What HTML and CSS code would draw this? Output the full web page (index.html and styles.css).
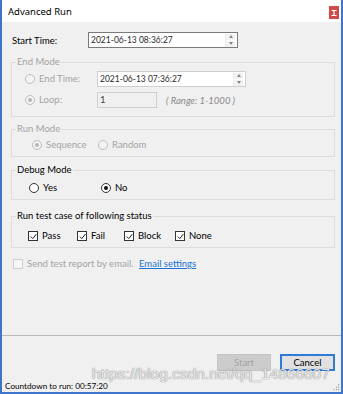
FILE: index.html
```html
<!DOCTYPE html>
<html>
<head>
<meta charset="utf-8">
<link rel="stylesheet" href="styles.css">
</head>
<body>
<div class="win">
  <div class="titlebar">
    <span class="title">Advanced Run</span>
    <span class="close"><svg width="6" height="6" viewBox="0 0 6 6"><path d="M0.5 0.5h5M0.5 5.5h5M3 0.5v5" stroke="#fff" stroke-width="1.2" fill="none"/></svg></span>
  </div>
  <div class="main">
    <div class="row start-row">
      <span class="lbl">Start Time:</span>
      <div class="input dark">
        <span class="val num">2021-06-13 08:36:27</span>
        <span class="spin"><i class="up"></i><i class="down"></i></span>
      </div>
    </div>

    <fieldset class="grp g-end">
      <legend class="dis">End Mode</legend>
      <div class="gbody">
        <div class="row er">
          <span class="radio dis-r"></span><span class="rl dis w-end">End Time:</span>
          <div class="input light wide">
            <span class="val num">2021-06-13 07:36:27</span>
            <span class="spin"><i class="up"></i><i class="down"></i></span>
          </div>
        </div>
        <div class="row er loop">
          <span class="radio dis-r on"></span><span class="rl dis w-end">Loop:</span>
          <div class="input gray short"><span class="val">1</span></div>
          <span class="range">( Range: 1-1000 )</span>
        </div>
      </div>
    </fieldset>

    <fieldset class="grp g-run">
      <legend class="dis">Run Mode</legend>
      <div class="gbody row opts run-opts">
        <span class="opt"><span class="radio dis-r on"></span><span class="rl dis">Sequence</span></span>
        <span class="opt"><span class="radio dis-r"></span><span class="rl dis">Random</span></span>
      </div>
    </fieldset>

    <fieldset class="grp g-debug">
      <legend>Debug Mode</legend>
      <div class="gbody row opts debug-opts">
        <span class="opt o-yes"><span class="radio"></span><span class="rl">Yes</span></span>
        <span class="opt"><span class="radio on"></span><span class="rl">No</span></span>
      </div>
    </fieldset>

    <fieldset class="grp g-status">
      <legend>Run test case of following status</legend>
      <div class="gbody row opts st-opts">
        <span class="opt c-pass"><span class="cb"><svg width="7" height="7" viewBox="0 0 7 7"><path d="M0.8 3.6l2 2 3.6-4.6" stroke="#222" stroke-width="1" fill="none"/></svg></span><span class="rl">Pass</span></span>
        <span class="opt c-fail"><span class="cb"><svg width="7" height="7" viewBox="0 0 7 7"><path d="M0.8 3.6l2 2 3.6-4.6" stroke="#222" stroke-width="1" fill="none"/></svg></span><span class="rl">Fail</span></span>
        <span class="opt c-block"><span class="cb"><svg width="7" height="7" viewBox="0 0 7 7"><path d="M0.8 3.6l2 2 3.6-4.6" stroke="#222" stroke-width="1" fill="none"/></svg></span><span class="rl">Block</span></span>
        <span class="opt"><span class="cb"><svg width="7" height="7" viewBox="0 0 7 7"><path d="M0.8 3.6l2 2 3.6-4.6" stroke="#222" stroke-width="1" fill="none"/></svg></span><span class="rl">None</span></span>
      </div>
    </fieldset>

    <div class="row send-row">
      <span class="cb dis-cb"></span><span class="rl dis send-lbl">Send test report by email.</span>
      <a class="link">Email settings</a>
    </div>
  </div>
  <div class="footer">
    <div class="btn btn-dis">Start</div>
    <div class="btn btn-def">Cancel</div>
  </div>
  <div class="status">
    <span class="st-text">Countdown to run: 00:57:20</span>
    <span class="grip"><svg width="7" height="7" viewBox="0 0 7 7" fill="#9a9a9a"><rect x="5" y="0" width="1.2" height="1.2"/><rect x="3" y="2.5" width="1.2" height="1.2"/><rect x="5" y="2.5" width="1.2" height="1.2"/><rect x="0.5" y="5" width="1.2" height="1.2"/><rect x="3" y="5" width="1.2" height="1.2"/><rect x="5" y="5" width="1.2" height="1.2"/></svg></span>
  </div>
  <div class="watermark">https://blog.csdn.net/qq_14866607</div>
</div>
</body>
</html>
```
FILE: styles.css
```css
* { box-sizing: border-box; }
html, body { margin: 0; padding: 0; background: #f0f0f0; }
body {
  font-family: Lato, "Noto Sans", sans-serif;
  font-size: 9.5px;
  color: #000;
}
.win {
  position: relative;
  width: 343px;
  height: 394px;
  border-left: 2px solid #3e74cc;
  border-right: 2px solid #3e74cc;
  border-bottom: 2px solid #3e74cc;
  background: #f0f0f0;
  display: flex;
  flex-direction: column;
  overflow: hidden;
}
.titlebar {
  height: 22px;
  background: #fff;
  display: flex;
  align-items: flex-start;
  justify-content: space-between;
  padding-left: 6px;
}
.title { line-height: 12px; margin-top: 6px; font-family: "Noto Sans", sans-serif; font-size: 9.5px; }
.close {
  width: 10px;
  height: 13px;
  margin-top: 6px;
  margin-right: 2px;
  background: #cf4b4b;
  display: flex;
  align-items: center;
  justify-content: center;
}
.main {
  flex: 1;
  padding: 0 6px 0 9px;
  display: flex;
  flex-direction: column;
}
.row { display: flex; align-items: center; }
.start-row { margin-top: 10px; height: 16px; }
.lbl { width: 77px; padding-left: 1px; }
.input {
  position: relative;
  height: 16px;
  background: #fff;
  display: flex;
  align-items: center;
  padding-left: 2px;
  color: #222;
}
.input.dark { width: 150px; border: 1px solid #7a7a7a; }
.input.light { border: 1px solid #cfcfcf; }
.input.wide { width: 149px; }
.input.gray { background: #f0f0f0; border: 1px solid #cfcfcf; color: #444; }
.input.short { width: 60px; }
.val { flex: 1; line-height: 12px; }
.val.num { font-size: 8.5px; color: #2a2a2a; }
.spin {
  width: 9px;
  height: 14px;
  margin-right: 3px;
  display: flex;
  flex-direction: column;
  justify-content: center;
  gap: 1px;
  border-left: 1px solid #eee;
}
.spin i {
  width: 9px; height: 6px;
  background: #f2f2f2;
  position: relative;
  display: block;
}
.spin i::after {
  content: "";
  position: absolute;
  left: 2.5px; top: 1.5px;
  border-left: 2px solid transparent;
  border-right: 2px solid transparent;
}
.spin i.up::after { border-bottom: 3px solid #888; }
.spin i.down::after { border-top: 3px solid #888; }

.grp {
  margin: 0;
  padding: 0;
  border: 1px solid #dcdcdc;
  min-width: 0;
}
.grp legend {
  padding: 0 1px;
  margin-left: 4px;
  line-height: 12px;
}
.dis { color: #a3a3a3; }
.g-end { margin-top: 8px; }
.g-end .gbody { padding: 3px 0 8px 13px; }
.er { height: 16px; }
.loop { margin-top: 5px; }
.w-end { width: 58px; }
.radio {
  width: 10px; height: 10px;
  border-radius: 50%;
  border: 1px solid #333;
  background: #fff;
  position: relative;
  flex: none;
}
.radio.on::after {
  content: "";
  position: absolute;
  left: 2px; top: 2px;
  width: 4px; height: 4px;
  border-radius: 50%;
  background: #111;
}
.radio.dis-r { border-color: #bcbcbc; background: #f4f4f4; }
.radio.dis-r.on::after { background: #b4b4b4; }
.rl { margin-left: 4px; line-height: 12px; }
.range { margin-left: 9px; font-style: italic; color: #8a8a8a; }

.g-run { margin-top: 6px; }
.g-run .gbody { padding: 4px 0 5px 20px; }
.opts { height: 12px; box-sizing: content-box; }
.opt { display: flex; align-items: center; }
.run-opts .opt:first-child { width: 66px; }

.g-debug { margin-top: 7px; }
.g-debug .gbody { padding: 6px 0 5px 17px; }
.o-yes { width: 72px; }

.g-status { margin-top: 10px; }
.g-status .gbody { padding: 8px 0 5px 16px; }
.cb {
  width: 10px; height: 10px;
  border: 1px solid #333;
  background: #fff;
  display: flex;
  align-items: center;
  justify-content: center;
  flex: none;
}
.c-pass { width: 49px; }
.c-fail { width: 47px; }
.c-block { width: 51px; }

.send-row { margin-top: 10px; height: 12px; padding-left: 2px; }
.dis-cb { border-color: #cfcfcf; background: #f7f7f7; }
.send-lbl { width: 112px; }
.link { color: #1a73d6; text-decoration: underline; line-height: 12px; }

.footer {
  height: 44px;
  border-top: 1px solid #b9b9b9;
  display: flex;
  justify-content: flex-end;
  align-items: flex-start;
  gap: 9px;
  padding: 18px 6px 0 0;
}
.btn {
  width: 54px;
  height: 17px;
  display: flex;
  align-items: center;
  justify-content: center;
}
.btn-dis { background: #cccccc; border: 1px solid #c4c4c4; color: #a3a3a3; }
.btn-def { width: 55px; background: #e1e1e1; border: 1px solid #2f7bd9; box-shadow: inset 0 0 0 1px #2f7bd9; }

.status {
  height: 13px;
  display: flex;
  justify-content: space-between;
  align-items: center;
  padding: 0 1px 0 3px;
  line-height: 12px;
}
.st-text { font-size: 8.2px; }
.grip { display: flex; align-self: flex-end; margin-bottom: 1px; }

.watermark {
  position: absolute;
  left: 90px;
  top: 365px;
  font-family: "Liberation Sans", Arial, sans-serif;
  font-size: 15.5px;
  color: rgba(255, 255, 255, 0.85);
  text-shadow: 0 0 1px rgba(80, 80, 80, 0.6), 0 0 1px rgba(80, 80, 80, 0.6);
  white-space: nowrap;
  pointer-events: none;
}
```
